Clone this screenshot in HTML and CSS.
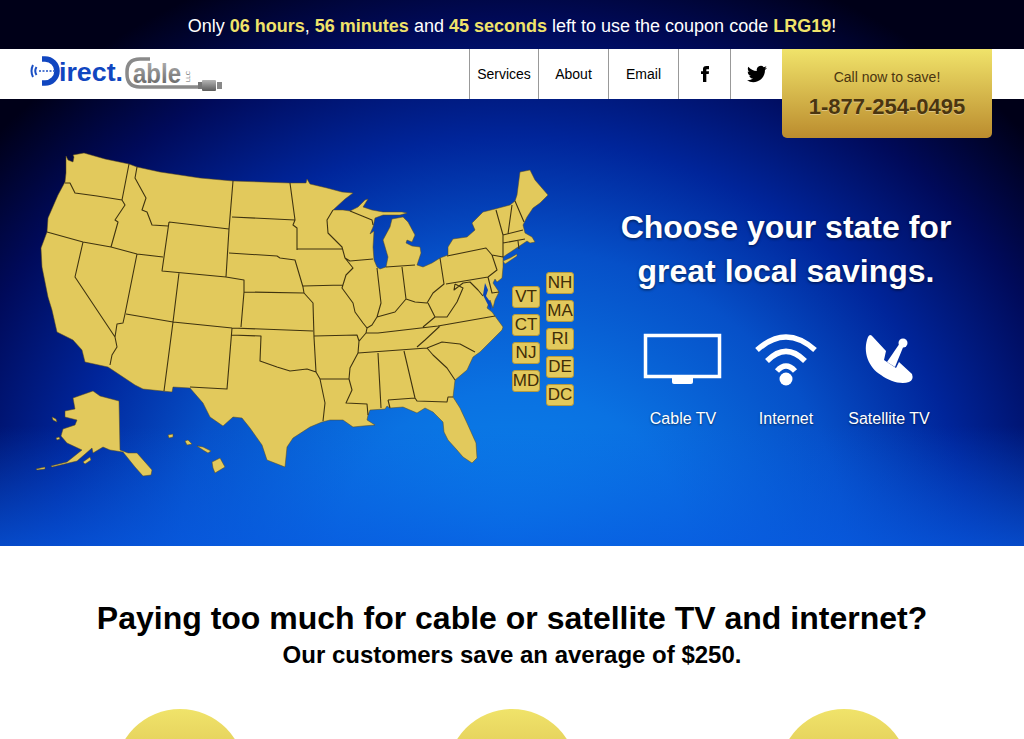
FILE: index.html
```html
<!DOCTYPE html>
<html lang="en">
<head>
<meta charset="utf-8">
<title>Direct Cable</title>
<link rel="stylesheet" href="styles.css">
</head>
<body>
<div class="top">
  <div class="promo"><div>Only <b>06 hours</b>, <b>56 minutes</b> and <b>45 seconds</b> left to use the coupon code <b>LRG19</b>!</div></div>
  <header class="header">
    <svg class="logo" viewBox="0 0 200 50" width="200" height="50">
      <defs>
        <linearGradient id="grey" x1="0" y1="0" x2="0" y2="1"><stop offset="0" stop-color="#b5b5b5"/><stop offset="1" stop-color="#5c5c5c"/></linearGradient>
      </defs>
      <path class="logo-blue-line" d="M3 16Q0 22 3 28M6.500 18Q4 22 6.500 26"/>
      <path class="logo-blue-line thin" d="M9 22H24"/>
      <path class="logo-d" d="M12 10H15A12 12 0 0 1 15 34H12"/>
      <text class="logo-direct" x="29" y="32" textLength="64" lengthAdjust="spacingAndGlyphs">irect.</text>
      <path class="logo-c" d="M120 10H110Q97 10 97 23V25Q97 38 110 38H168"/>
      <text class="logo-able" x="103" y="34" textLength="48" lengthAdjust="spacingAndGlyphs">able</text>
      <text class="logo-llc" transform="translate(160 33) rotate(-90)">LLC</text>
      <rect x="168" y="33" width="4" height="7" fill="#777"/>
      <rect x="172" y="31" width="14" height="11" rx="1" fill="url(#grey)"/>
      <rect x="187" y="33" width="5" height="7" fill="#888"/>
    </svg>
    <nav class="nav">
      <a class="nav-item w69">Services</a>
      <a class="nav-item w70">About</a>
      <a class="nav-item w70">Email</a>
      <a class="nav-item w52"><svg class="icon" viewBox="0 0 24 24" width="16" height="16"><path d="M9 8H6v4h3v12h5V12h3.642L18 8h-4V6.333C14 5.378 14.192 5 15.115 5H18V0h-3.808C10.596 0 9 1.583 9 4.615V8z"/></svg></a>
      <a class="nav-item w52"><svg class="icon" viewBox="0 0 24 24" width="20" height="20"><path d="M23.953 4.570a10 10 0 01-2.825.775 4.958 4.958 0 002.163-2.723c-.951.555-2.005.959-3.127 1.184a4.920 4.920 0 00-8.384 4.482C7.690 8.095 4.067 6.130 1.640 3.162a4.822 4.822 0 00-.666 2.475c0 1.710.870 3.213 2.188 4.096a4.904 4.904 0 01-2.228-.616v.060a4.923 4.923 0 003.946 4.827 4.996 4.996 0 01-2.212.085 4.936 4.936 0 004.604 3.417 9.867 9.867 0 01-6.102 2.105c-.390 0-.779-.023-1.170-.067a13.995 13.995 0 007.557 2.209c9.053 0 13.998-7.496 13.998-13.985 0-.210 0-.420-.015-.630A9.935 9.935 0 0024 4.590z"/></svg></a>
    </nav>
    <div class="call">
      <div class="call-label">Call now to save!</div>
      <div class="call-phone">1-877-254-0495</div>
    </div>
  </header>
  <section class="hero">
    <div class="map">
      <svg class="map-svg" viewBox="30 145 550 340" width="550" height="340">
        <path class="land" d="M66 156L68 160L73 162L74 157L73 155L84 153L105 159L129 164L137 167L160 172L200 178L233 181L290 183L306 183L307 179L310 184L327 188L342 192L353 193L345 199L333 210L343 210L350 211L358 207L365 200L368 199L363 207L372 210L383 212L402 212L407 213L400 215L383 215L375 218L373 227L370 234L374 231L373 247L374 260L377 267L380 269L386 267L388 257L383 240L390 227L392 219L403 217L408 222L415 235L412 242L407 240L406 243L412 246L420 247L421 253L417 265L423 267L432 263L440 258L448 255L448 247L453 239L467 237L475 230L472 223L483 212L495 209L510 205L515 201L517 195L520 172L530 170L535 180L548 195L540 203L533 208L527 217L523 225L525 233L532 237L535 242L530 243L527 241L518 247L503 257L503 267L502 278L497 282L495 279L493 283L499 292L495 300L493 308L490 300L487 308L492 312L503 327L502 330L495 337L480 352L473 357L467 370L455 380L453 397L460 408L467 423L476 443L477 458L472 463L463 457L457 450L448 440L444 432L443 422L433 412L425 408L417 413L403 407L390 408L387 406L385 409L370 410L368 415L367 420L375 425L363 426L353 427L343 420L330 420L322 422L310 427L293 438L287 447L285 467L267 460L262 445L250 428L242 418L233 417L223 426L210 417L203 403L190 388L173 387L172 392L143 389L135 385L108 367L85 362L82 350L73 340L57 332L52 310L48 297L42 267L41 248L47 232L48 218L58 195L65 182L66 173Z"/>
        <path class="land" d="M503 261L510 258L517 254L517 256L505 264Z"/>
        <path class="land" d="M73 398L93 391L100 396L119 401L120 450L128 453L137 453L152 470L151 475L143 476L135 467L123 452L110 450L103 447L93 453L92 448L77 461L52 467L51 466L67 462L82 450L67 443L61 436L63 429L75 425L77 420L65 417L65 411L75 409Z"/>
        <path class="land" d="M36 469L45 467L45 469L37 470ZM83 462L90 457L91 460L85 464ZM52 417L56 419L57 422L53 420ZM56 438L59 437L60 439L57 440Z"/>
        <path class="land" d="M168 435L173 434L173 437L169 438ZM185 441L188 440L192 444L187 445ZM197 446L203 447L211 451L208 453L203 450ZM212 462L220 458L225 467L215 473L213 468Z"/>
        <path class="border" d="M65 183L70 183L75 193L97 196L122 200M129 164L122 200L125 205L115 220L118 222L111 247M47 232L83 242L111 247L137 254L163 257M137 167L135 178L146 198L142 210L147 212L152 225L168 226M169 222L229 229L226 277L162 271L169 222M233 181L229 229M232 217L295 220M290 183L295 220L293 225L297 228L297 250M229 253L277 256L280 258L295 260L303 287L304 293M226 277L244 280L244 292L304 293M297 249L342 249M303 286L343 285M83 242L75 277L115 337L117 347L112 355L110 365M137 254L125 314L123 323L117 324L115 337M179 273L173 322L164 391M126 314L173 322L232 328L313 331M244 292L241 327M232 328L227 389L190 387M231 335L261 336L260 361L277 367L290 371L307 369L316 372L320 379L349 379M304 293L313 303L314 337L316 372M314 336L357 335L359 341L358 353L350 368L349 379L352 390L346 403L367 404L368 415M320 379L325 403L323 421M333 210L327 220L328 233L342 247L345 258L350 261L373 259M350 211L372 220L373 225M345 258L353 268L346 275L342 288L353 303L355 312L363 323L367 328L366 333L360 340L359 341M377 268L381 303L377 317L372 325L367 328M377 317L395 312L406 299L402 267M386 267L415 265M406 299L415 302L427 303L433 293L444 284L440 258M447 256L486 248L492 255L497 270L488 277L446 284M455 284L454 290L463 283L470 282L478 290L483 296M488 277L492 293L499 292M455 284L463 288L457 302L447 317L435 317L428 303M435 317L423 327M366 333L378 333L438 326L495 316M358 353L427 348L442 342L460 344L475 352M427 348L433 355L447 368L455 380M440 326L425 340L417 347M404 351L415 398L417 401L447 402L448 397L453 397M378 353L381 408M388 400L415 398M388 400L390 408M496 210L503 235L503 257L492 255M512 205L508 234M515 201L524 222M503 235L523 230M503 243L525 239M518 241L519 249"/>
        <path class="water" d="M485 283L488 290L486 296L491 303L491 310L487 303L483 295Z"/>
      </svg>
      <div class="states">
        <div class="state-col col-a"><a class="state">VT</a><a class="state">CT</a><a class="state">NJ</a><a class="state">MD</a></div>
        <div class="state-col"><a class="state">NH</a><a class="state">MA</a><a class="state">RI</a><a class="state">DE</a><a class="state">DC</a></div>
      </div>
    </div>
    <div class="pitch">
      <h1 class="pitch-title">Choose your state for<br>great local savings.</h1>
      <div class="services">
        <div class="service">
          <svg class="service-icon" viewBox="0 0 80 60" width="80" height="60"><rect class="tv" x="2.500" y="5.500" width="74" height="41"/><path class="solid" d="M29 48H50V52Q50 54 48 54H31Q29 54 29 52Z"/></svg>
          <span>Cable TV</span>
        </div>
        <div class="service">
          <svg class="service-icon" viewBox="0 0 80 60" width="80" height="60"><path class="wifi" d="M11 20Q40 -6 69 20M21 31Q40 12 59 31M31 41Q40 31 49 41"/><circle class="solid" cx="40" cy="49" r="6.500"/></svg>
          <span>Internet</span>
        </div>
        <div class="service">
          <svg class="service-icon" viewBox="0 0 80 60" width="80" height="60"><path class="solid" d="M19 7C13 22 20 38 32 45C40 51 52 55 60 52Q65 50 63 44L50 32L47 38L35 30L37 21L24 7Q21 3 19 7Z"/><path class="solid" d="M38 32L46 37L55 15L51 13Z"/><circle class="solid" cx="54" cy="13" r="4.500"/></svg>
          <span>Satellite TV</span>
        </div>
      </div>
    </div>
  </section>
</div>
<main class="savings">
  <h2 class="savings-title">Paying too much for cable or satellite TV and internet?</h2>
  <p class="savings-sub">Our customers save an average of $250.</p>
  <div class="circles">
    <div class="circle"></div>
    <div class="circle"></div>
    <div class="circle"></div>
  </div>
</main>
</body>
</html>
```
FILE: styles.css
```css
* { box-sizing: border-box; }
html, body { margin: 0; padding: 0; background: #fff; }
body { font-family: "Liberation Sans", Arial, sans-serif; color: #000; height: 739px; overflow: hidden; }

.top {
  background: radial-gradient(ellipse 690px 620px at 50% 100%, #0a86ec 0%, #0a72e2 25%, #0650c8 48%, #00259a 66%, #000a5a 84%, #000018 100%);
}
.promo { height: 49px; display: flex; align-items: center; justify-content: center; color: #fff; font-size: 18px; padding-top: 3px; }
.promo b { color: #f0e36a; }

.header { height: 50px; background: #fff; display: flex; padding-left: 30px; position: relative; }
.logo { display: block; flex: none; }
.logo-blue-line { fill: none; stroke: #1a4fc4; stroke-width: 2; }
.logo-blue-line.thin { stroke-width: 1.500; stroke-dasharray: 2 1.500; }
.logo-d { fill: none; stroke: #1046c0; stroke-width: 5.500; }
.logo-direct { font: bold 26px "Liberation Sans", sans-serif; fill: #1046c0; }
.logo-c { fill: none; stroke: #8a8a8a; stroke-width: 3.500; }
.logo-able { font: bold 27px "Liberation Sans", sans-serif; fill: url(#grey); }
.logo-llc { font: 6px "Liberation Sans", sans-serif; fill: #666; }

.nav { display: flex; margin-left: 239px; height: 50px; }
.nav-item { border-left: 1px solid #999; display: flex; align-items: center; justify-content: center; font-size: 14px; color: #000; }
.w69 { width: 69px; }
.w70 { width: 70px; }
.w52 { width: 52px; }
.icon { fill: #000; display: block; }

.call {
  width: 210px; height: 89px; position: relative; z-index: 1; flex: none;
  background: linear-gradient(#f0e36a, #bb8c2e);
  border-radius: 0 0 5px 5px;
  text-align: center; color: #4a3510;
  padding-top: 20px;
}
.call-label { font-size: 14px; line-height: 16px; }
.call-phone { font-size: 22px; line-height: 26px; font-weight: bold; margin-top: 9px; text-shadow: 0 1px 0 rgba(255,255,255,.35); }

.hero {
  height: 447px; display: flex; align-items: flex-start; padding: 46px 0 0 30px;
  background: linear-gradient(to top, rgba(8,90,225,.75) 0, rgba(8,90,225,0) 120px);
}
.map { position: relative; width: 550px; height: 340px; flex: none; }
.map-svg { display: block; }
.land { fill: #e2c95c; stroke: #5a4a1a; stroke-width: .5; stroke-linejoin: round; }
.border { fill: none; stroke: #3f3310; stroke-width: 1.100; stroke-linejoin: round; }
.water { fill: #0a45b8; }

.states { position: absolute; left: 482px; top: 127px; display: flex; gap: 6px; }
.state-col { display: flex; flex-direction: column; gap: 6px; }
.col-a { margin-top: 14px; }
.state {
  width: 28px; height: 22px; border-radius: 3px;
  background: #e2c95c; border: 1px solid #b59a3e;
  color: #3f2d08; font-size: 17px;
  display: flex; align-items: center; justify-content: center;
}

.pitch { width: 372px; margin-left: 20px; padding-top: 60px; display: flex; flex-direction: column; align-items: center; color: #fff; }
.pitch-title { margin: 0; font-size: 32px; line-height: 44px; font-weight: bold; text-align: center; text-shadow: 0 1px 3px rgba(0,0,0,.6); }
.services { display: flex; justify-content: center; gap: 0; margin-top: 37px; width: 309px; }
.service { width: 103px; display: flex; flex-direction: column; align-items: center; font-size: 16px; text-shadow: 0 1px 2px rgba(0,0,0,.5); }
.service-icon { display: block; margin-bottom: 20px; }
.service span { line-height: 18px; }
.tv { fill: none; stroke: #fff; stroke-width: 3.500; }
.solid { fill: #fff; }
.wifi { fill: none; stroke: #fff; stroke-width: 5.500; }

.savings { text-align: center; padding-top: 53px; height: 193px; overflow: hidden; }
.savings-title { margin: 0; font-size: 32px; line-height: 38px; font-weight: bold; }
.savings-sub { margin: 0; font-size: 24px; line-height: 36px; font-weight: bold; }
.circles { display: flex; justify-content: center; gap: 202px; margin-top: 36px; }
.circle { width: 130px; height: 130px; border-radius: 50%; background: linear-gradient(#f0e36a, #c9a63a); flex: none; }
```
